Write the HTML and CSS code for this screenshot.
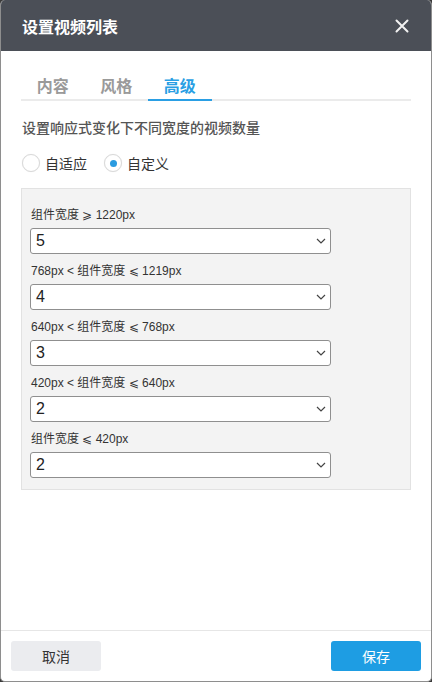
FILE: index.html
```html
<!DOCTYPE html>
<html lang="zh-CN">
<head>
<meta charset="utf-8">
<title>设置视频列表</title>
<link rel="stylesheet" href="styles.css">
</head>
<body>
<div class="dialog">
  <div class="header">
    <div class="title">设置视频列表</div>
    <svg class="close" width="14" height="14" viewBox="0 0 14 14"><path d="M1.5 1.5 L12.5 12.5 M12.5 1.5 L1.5 12.5" stroke="#f2f2f2" stroke-width="2" stroke-linecap="round"/></svg>
  </div>
  <div class="body">
    <div class="tabs">
      <div class="tab">内容</div>
      <div class="tab">风格</div>
      <div class="tab active">高级</div>
    </div>
    <div class="section-title">设置响应式变化下不同宽度的视频数量</div>
    <div class="radios">
      <div class="radio"><span class="circle"></span><span class="rlabel">自适应</span></div>
      <div class="radio"><span class="circle checked"></span><span class="rlabel">自定义</span></div>
    </div>
    <div class="box">
      <div class="group">
        <div class="label">组件宽度 ⩾ 1220px</div>
        <div class="select"><span class="val">5</span><svg width="10" height="6" viewBox="0 0 10 6"><path d="M1 1 L5 5 L9 1" fill="none" stroke="#444" stroke-width="1.2"/></svg></div>
      </div>
      <div class="group">
        <div class="label">768px &lt; 组件宽度 ⩽ 1219px</div>
        <div class="select"><span class="val">4</span><svg width="10" height="6" viewBox="0 0 10 6"><path d="M1 1 L5 5 L9 1" fill="none" stroke="#444" stroke-width="1.2"/></svg></div>
      </div>
      <div class="group">
        <div class="label">640px &lt; 组件宽度 ⩽ 768px</div>
        <div class="select"><span class="val">3</span><svg width="10" height="6" viewBox="0 0 10 6"><path d="M1 1 L5 5 L9 1" fill="none" stroke="#444" stroke-width="1.2"/></svg></div>
      </div>
      <div class="group">
        <div class="label">420px &lt; 组件宽度 ⩽ 640px</div>
        <div class="select"><span class="val">2</span><svg width="10" height="6" viewBox="0 0 10 6"><path d="M1 1 L5 5 L9 1" fill="none" stroke="#444" stroke-width="1.2"/></svg></div>
      </div>
      <div class="group">
        <div class="label">组件宽度 ⩽ 420px</div>
        <div class="select"><span class="val">2</span><svg width="10" height="6" viewBox="0 0 10 6"><path d="M1 1 L5 5 L9 1" fill="none" stroke="#444" stroke-width="1.2"/></svg></div>
      </div>
    </div>
  </div>
  <div class="footer">
    <button class="btn cancel">取消</button>
    <button class="btn save">保存</button>
  </div>
</div>
</body>
</html>
```
FILE: styles.css
```css
* { box-sizing: border-box; }
html, body { margin: 0; padding: 0; }
body {
  background: #3a3a3a;
  font-family: "Liberation Sans", "Noto Sans CJK SC", sans-serif;
  width: 432px;
  height: 682px;
  overflow: hidden;
}
.dialog {
  width: 432px;
  height: 682px;
  background: #fff;
  border-radius: 5px;
  overflow: hidden;
  display: flex;
  flex-direction: column;
  border-left: 1px solid #8e8e8e;
  border-right: 1px solid #8e8e8e;
  border-bottom: 1px solid #8e8e8e;
}
.header {
  height: 51px;
  flex: none;
  background: #4b4f57;
  display: flex;
  align-items: center;
  justify-content: space-between;
  padding: 0 22px 0 21px;
}
.title {
  color: #fff;
  font-size: 16px;
  font-weight: bold;
  font-family: "Noto Sans CJK SC", sans-serif;
}
.close { display: block; }
.body {
  flex: 1;
  padding: 20px 20px 0 20px;
}
.tabs {
  display: flex;
  height: 30px;
  border-bottom: 2px solid #ebebeb;
}
.tab {
  width: 63.5px;
  text-align: center;
  font-size: 16px;
  line-height: 28px;
  font-weight: bold;
  color: #9a9a9a;
  font-family: "Noto Sans CJK SC", sans-serif;
}
.tab.active {
  color: #2a9fe4;
  border-bottom: 2px solid #2a9fe4;
  margin-bottom: -2px;
  height: 30px;
}
.section-title {
  margin-top: 16px;
  font-size: 14px;
  line-height: 20px;
  color: #555;
  font-weight: 500;
  font-family: "Noto Sans CJK SC", sans-serif;
  padding-left: 1px;
}
.radios {
  margin-top: 16px;
  display: flex;
  gap: 17px;
  height: 20px;
  align-items: center;
  padding-left: 1px;
}
.radio {
  display: flex;
  align-items: center;
  gap: 5px;
}
.circle {
  width: 18px;
  height: 18px;
  border-radius: 50%;
  border: 1px solid #d9d9d9;
  background: #fff;
  box-shadow: 0 0 1px rgba(0,0,0,0.1);
  display: flex;
  align-items: center;
  justify-content: center;
}
.circle.checked::after {
  content: "";
  width: 7px;
  height: 7px;
  border-radius: 50%;
  background: #2a9be0;
}
.rlabel {
  font-size: 14px;
  color: #333;
  font-family: "Noto Sans CJK SC", sans-serif;
}
.box {
  margin-top: 15px;
  background: #f3f3f3;
  border: 1px solid #e2e2e2;
  padding: 16px 8px 11px 8px;
  display: flex;
  flex-direction: column;
  gap: 7px;
}
.label {
  font-size: 12px;
  line-height: 16px;
  padding-top: 2px;
  color: #333;
  padding-left: 1px;
}
.select {
  margin-top: 5px;
  width: 301px;
  height: 26px;
  background: #fff;
  border: 1px solid #8f8f8f;
  border-radius: 3px;
  display: flex;
  align-items: center;
  justify-content: space-between;
  padding: 0 4px 0 5px;
}
.val {
  font-size: 16px;
  color: #222;
}
.select svg { display: block; }
.footer {
  flex: none;
  border-top: 1px solid #e6e6e6;
  padding: 10px;
  display: flex;
  justify-content: space-between;
}
.btn {
  width: 90px;
  height: 30px;
  border: none;
  border-radius: 3px;
  font-size: 14px;
  font-family: "Noto Sans CJK SC", sans-serif;
  padding: 0;
}
.cancel { background: #ebecef; color: #333; }
.save { background: #1e9de3; color: #fff; }
```
